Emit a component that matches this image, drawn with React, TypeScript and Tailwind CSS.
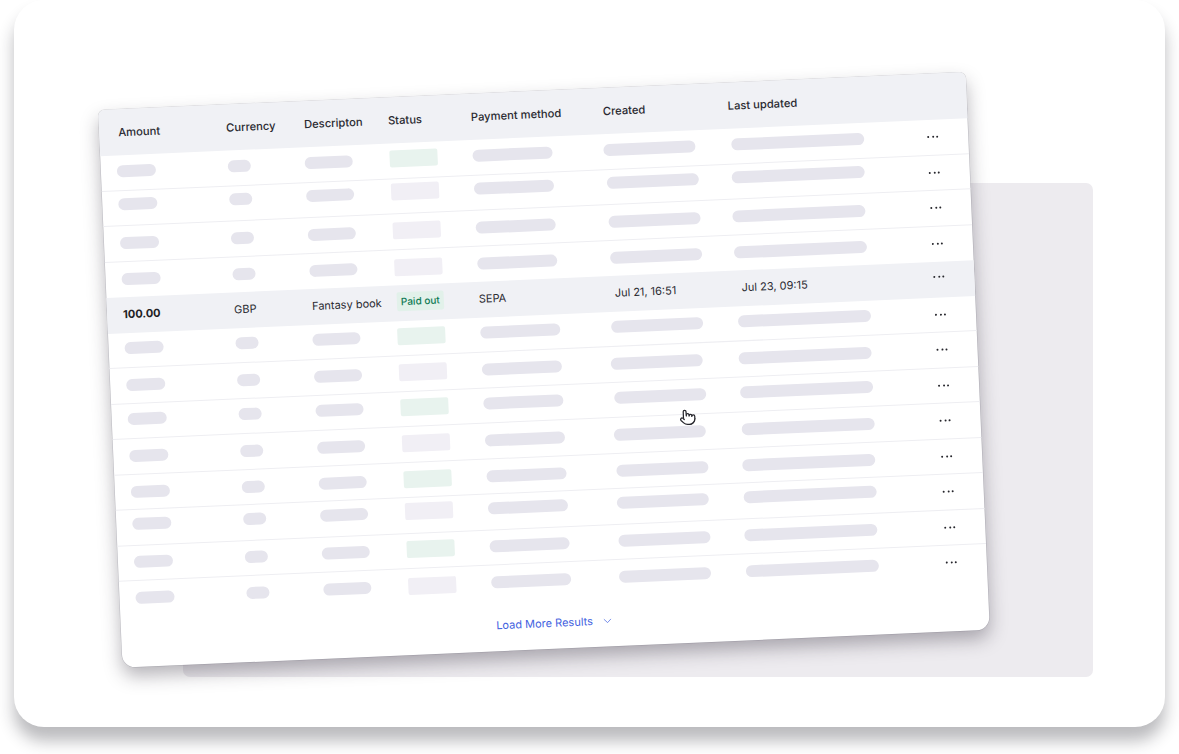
import { ChevronDown, Pointer } from 'lucide-react';

const cols = 'grid grid-cols-[111px_77px_84px_84px_131px_128px_196px_auto] pl-[16px]';

// the reference rows are not perfectly even, so each keeps its own small offsets
const rows = [
  { green: true, pad: 'pb-[3px]', created: 'ml-[0px]', updated: 'ml-[0px]' },
  { green: false, pad: 'pb-[8px]', created: 'ml-[2px]', updated: 'ml-[-1px]' },
  { green: false, pad: 'pb-[1px]', created: 'ml-[2px]', updated: 'ml-[-2px]' },
  { green: false, pad: 'pb-[0px]', created: 'ml-[2px]', updated: 'ml-[-2px]' },
  null,
  { green: true, pad: 'pb-[3px]', created: 'ml-[0px]', updated: 'ml-[-1px]' },
  { green: false, pad: 'pb-[1px]', created: 'ml-[-2px]', updated: 'ml-[-2px]' },
  { green: true, pad: 'pb-[3px]', created: 'ml-[0px]', updated: 'ml-[-2px]' },
  { green: false, pad: 'pb-[1px]', created: 'ml-[-2px]', updated: 'ml-[-2px]' },
  { green: true, pad: 'pb-[0px]', created: 'ml-[-1px]', updated: 'ml-[-3px]' },
  { green: false, pad: 'pb-[7px]', created: 'ml-[-2px]', updated: 'ml-[-3px]' },
  { green: true, pad: 'pb-[2px]', created: 'ml-[-2px]', updated: 'ml-[-4px]' },
  { green: false, pad: 'pb-[1px]', created: 'ml-[-3px]', updated: 'ml-[-4px]' },
];

function Bar({ className }: { className: string }) {
  return <div className={`h-[12px] rounded-full bg-[#e6e5ed] ${className}`} />;
}

function Dots() {
  return (
    <div className="flex gap-[2.5px] self-start mt-[16px]">
      <span className="h-[2px] w-[2px] rounded-full bg-[#26262c]" />
      <span className="h-[2px] w-[2px] rounded-full bg-[#26262c]" />
      <span className="h-[2px] w-[2px] rounded-full bg-[#26262c]" />
    </div>
  );
}

type RowProps = { green: boolean; pad: string; created: string; updated: string; last: boolean };

function SkeletonRow({ green, pad, created, updated, last }: RowProps) {
  return (
    <div className={`${cols} ${pad} h-[35.5px] items-center ${last ? '' : 'border-b border-[#eeeef2]'}`}>
      <Bar className="w-[39px]" />
      <Bar className="w-[23px]" />
      <Bar className="w-[48px]" />
      <div className={`ml-[1px] h-[17px] w-[48px] rounded-[2px] ${green ? 'bg-[#e8f3ee]' : 'bg-[#f1eff5]'}`} />
      <Bar className="w-[80px]" />
      <Bar className={`w-[92px] ${created}`} />
      <Bar className={`w-[133px] ${updated}`} />
      <Dots />
    </div>
  );
}

function ActiveRow() {
  return (
    <div className={`${cols} h-[35.5px] items-center bg-[#f0f1f5] pb-[2px] text-[#2a2a31]`}>
      <span className="font-bold text-[#1f1f25]">100.00</span>
      <span>GBP</span>
      <span className="ml-[1px]">Fantasy book</span>
      <span className="ml-[2px] w-[47px] rounded-[2px] bg-[#e2f1ea] py-[2px] text-center text-[10px] font-medium text-[#0f7a55]">
        Paid out
      </span>
      <span>SEPA</span>
      <span className="ml-[5px]">Jul 21, 16:51</span>
      <span className="ml-[4px]">Jul 23, 09:15</span>
      <div className="mt-[-2px] self-start">
        <Dots />
      </div>
    </div>
  );
}

export default function App() {
  return (
    <div className="h-[754px] w-[1179px] overflow-hidden bg-white px-[14px] font-['Inter',sans-serif] text-[11px]">
      <div className="relative h-[727px] w-[1151px] rounded-[30px] bg-white pl-[169px] pt-[183px] shadow-[0_14px_16px_rgba(30,30,40,0.3)]">
        <div className="h-[494px] w-[910px] rounded-[7px] bg-[#edebef]" />

        <div className="absolute left-[95.5px] top-[91px] h-[558px] w-[868px] rotate-[-2.5deg] rounded-t-[6px] rounded-b-[13px] bg-white shadow-[0_0_0_0.5px_rgba(60,60,80,0.2),0_9px_18px_rgba(40,36,50,0.34)]">
          <div className={`${cols} h-[46px] items-center rounded-t-[6px] bg-[#f0f1f5] text-[11.2px] font-medium text-[#2a2a31]`}>
            <span className="ml-[3px]">Amount</span>
            <span>Currency</span>
            <span className="ml-[1px]">Descripton</span>
            <span className="ml-[1px]">Status</span>
            <span>Payment method</span>
            <span className="ml-[1px]">Created</span>
            <span className="ml-[-2px]">Last updated</span>
            <span />
          </div>

          {rows.map((row, i) =>
            row ? (
              <SkeletonRow
                key={i}
                green={row.green}
                pad={row.pad}
                created={row.created}
                updated={row.updated}
                last={i === rows.length - 1 || i === 3}
              />
            ) : (
              <ActiveRow key={i} />
            ),
          )}

          <div className="flex h-[50px] items-center justify-center gap-[8px] text-[#3f5fe0]">
            <span>Load More Results</span>
            <ChevronDown size={13} strokeWidth={1.25} />
          </div>

          <Pointer
            size={17}
            strokeWidth={1.75}
            className="absolute left-[567px] top-[324px] fill-white text-[#26262c]"
          />
        </div>
      </div>
    </div>
  );
}
